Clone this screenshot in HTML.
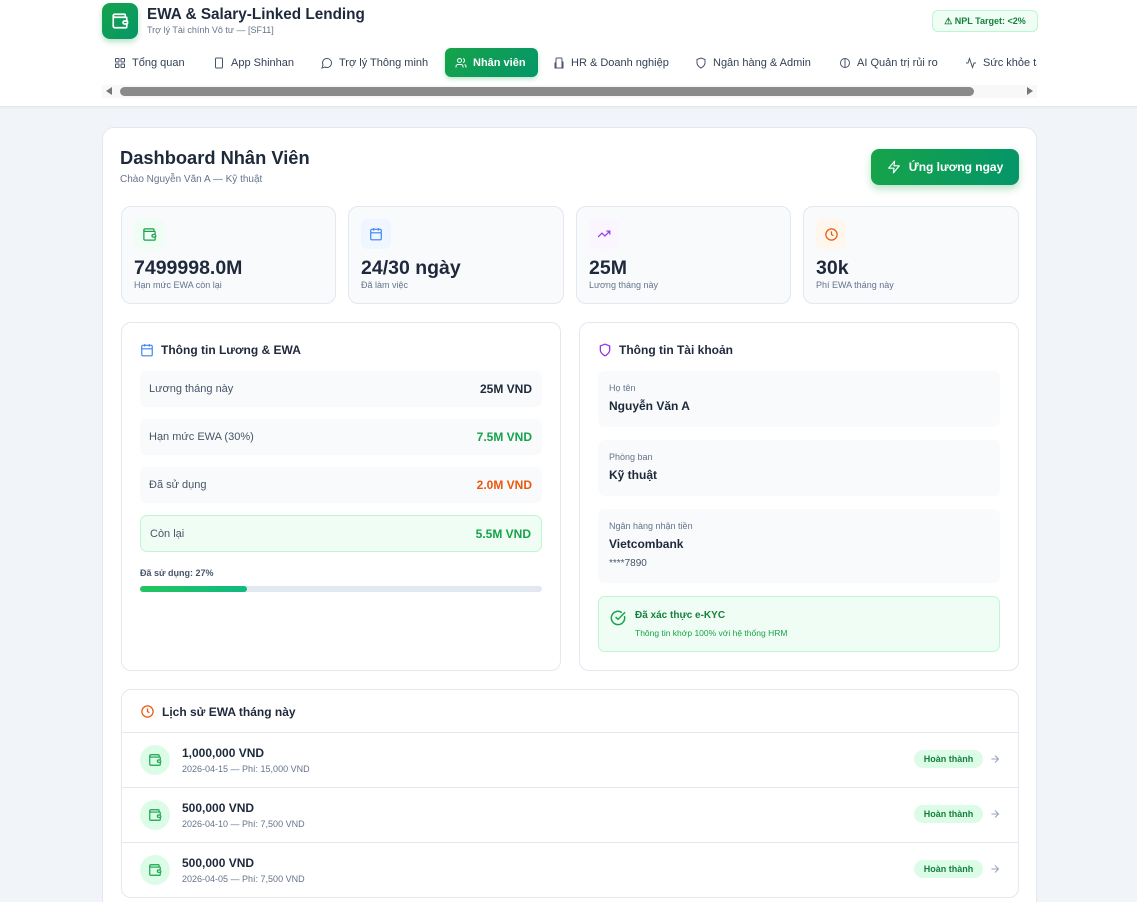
<!DOCTYPE html>
<html><head><meta charset="utf-8">
<style>
*{box-sizing:border-box;margin:0;padding:0}
html,body{width:1137px;height:902px;overflow:hidden}
body{background:#f1f5f9;font-family:"Liberation Sans",sans-serif;color:#1e293b;position:relative}
.a{position:absolute}
svg{display:block}
.hdr{left:0;top:0;width:1137px;height:107px;background:#fff;border-bottom:1px solid #e2e8f0;box-shadow:0 1px 3px rgba(0,0,0,.05)}
.logo{left:102px;top:3px;width:36px;height:36px;border-radius:8px;background:linear-gradient(135deg,#16a34a,#059669);box-shadow:0 3px 6px rgba(22,163,74,.3);display:flex;align-items:center;justify-content:center}
.tab{top:48px;height:29px;display:flex;align-items:center;gap:6px;font-size:11px;color:#334155;padding:0 10px;white-space:nowrap}
.tab.act{background:linear-gradient(135deg,#16a34a,#059669);color:#fff;font-weight:bold;border-radius:6px;box-shadow:0 2px 4px rgba(22,163,74,.3)}
.card{left:102px;top:127px;width:935px;height:800px;background:#fff;border:1px solid #e2e8f0;border-radius:12px}
.stat{top:206px;height:98px;background:#f8fafc;border:1px solid #e2e8f0;border-radius:10px}
.stat .ic{position:absolute;left:12px;top:12px;width:30px;height:30px;border-radius:7px;display:flex;align-items:center;justify-content:center}
.stat .v{position:absolute;left:12px;top:50px;font-size:19.5px;font-weight:bold;color:#1e293b}
.stat .l{position:absolute;left:12px;top:73px;font-size:9px;color:#64748b}
.pan{top:322px;height:349px;background:#fff;border:1px solid #e2e8f0;border-radius:10px}
.ph{font-size:12px;font-weight:bold;display:flex;align-items:center;gap:7px}
.row{left:140px;width:402px;height:36px;background:#f8fafc;border-radius:7px;display:flex;align-items:center;justify-content:space-between;padding:0 10px 0 9px;font-size:11px;color:#475569}
.row b{font-size:12px;color:#1e293b}
.box{left:598px;width:402px;background:#f8fafc;border-radius:7px;padding:12px 11px}
.box .k{font-size:9px;color:#64748b}
.box .val{font-size:12px;font-weight:bold;margin-top:6px;color:#1e293b}
.hist{left:121px;top:689px;width:898px;height:209px;background:#fff;border:1px solid #e2e8f0;border-radius:10px;overflow:hidden}
.hr{position:absolute;left:0;width:898px;height:55px;border-top:1px solid #e2e8f0}
.hr .c{position:absolute;left:18px;top:12px;width:30px;height:30px;border-radius:50%;background:#dcfce7;display:flex;align-items:center;justify-content:center}
.hr .t{position:absolute;left:60px;top:13px;font-size:12px;font-weight:bold}
.hr .s{position:absolute;left:60px;top:31px;font-size:9px;color:#64748b}
.hr .bd{position:absolute;left:792px;top:17px;width:69px;height:18px;border-radius:9px;background:#dcfce7;color:#15803d;font-size:9px;font-weight:bold;text-align:center;line-height:18px}
.hr .ar{position:absolute;left:867px;top:20px}
</style></head><body>
<div class="a hdr"></div>
<div class="a logo"><svg width="18" height="18" viewBox="0 0 24 24" fill="none" stroke="#fff" stroke-width="2.2" stroke-linecap="round" stroke-linejoin="round"><path d="M19 7V4a1 1 0 0 0-1-1H5a2 2 0 0 0 0 4h15a1 1 0 0 1 1 1v4h-3a2 2 0 0 0 0 4h3a1 1 0 0 0 1-1v-2a1 1 0 0 0-1-1"/><path d="M3 5v14a2 2 0 0 0 2 2h15a1 1 0 0 0 1-1v-4"/></svg></div>
<div class="a" style="left:147px;top:6px;font-size:15.3px;font-weight:bold;color:#1e293b">EWA &amp; Salary-Linked Lending</div>
<div class="a" style="left:147px;top:25px;font-size:9px;color:#64748b">Trợ lý Tài chính Vô tư — [SF11]</div>
<div class="a" style="left:932px;top:10px;width:106px;height:22px;border:1px solid #bbf7d0;background:#f0fdf4;border-radius:6px;font-size:9px;font-weight:bold;color:#15803d;text-align:center;line-height:20px">⚠ NPL Target: &lt;2%</div>

<div class="a tab" style="left:104px"><svg width="12" height="12" viewBox="0 0 24 24" fill="none" stroke="#475569" stroke-width="2"><rect x="3" y="3" width="7" height="7" rx="1"/><rect x="14" y="3" width="7" height="7" rx="1"/><rect x="3" y="14" width="7" height="7" rx="1"/><rect x="14" y="14" width="7" height="7" rx="1"/></svg>Tổng quan</div>
<div class="a tab" style="left:203px"><svg width="12" height="12" viewBox="0 0 24 24" fill="none" stroke="#475569" stroke-width="2"><rect x="5" y="2" width="14" height="20" rx="2"/></svg>App Shinhan</div>
<div class="a tab" style="left:311px"><svg width="12" height="12" viewBox="0 0 24 24" fill="none" stroke="#475569" stroke-width="2"><path d="M7.9 20A9 9 0 1 0 4 16.1L2 22Z"/></svg>Trợ lý Thông minh</div>
<div class="a tab act" style="left:445px;width:93px"><svg width="12" height="12" viewBox="0 0 24 24" fill="none" stroke="#fff" stroke-width="2"><path d="M16 21v-2a4 4 0 0 0-4-4H6a4 4 0 0 0-4 4v2"/><circle cx="9" cy="7" r="4"/><path d="M22 21v-2a4 4 0 0 0-3-3.9M16 3.1a4 4 0 0 1 0 7.8"/></svg>Nhân viên</div>
<div class="a tab" style="left:543px"><svg width="12" height="12" viewBox="0 0 24 24" fill="none" stroke="#475569" stroke-width="2"><path d="M6 22V4a2 2 0 0 1 2-2h8a2 2 0 0 1 2 2v18ZM6 12H4v10h16V10h-2"/></svg>HR &amp; Doanh nghiệp</div>
<div class="a tab" style="left:685px"><svg width="12" height="12" viewBox="0 0 24 24" fill="none" stroke="#475569" stroke-width="2"><path d="M12 22s8-4 8-10V5l-8-3-8 3v7c0 6 8 10 8 10z"/></svg>Ngân hàng &amp; Admin</div>
<div class="a tab" style="left:829px"><svg width="12" height="12" viewBox="0 0 24 24" fill="none" stroke="#475569" stroke-width="2"><circle cx="12" cy="12" r="9"/><path d="M12 3v18"/></svg>AI Quản trị rủi ro</div>
<div class="a" style="left:955px;top:48px;width:82px;height:29px;overflow:hidden"><div class="tab" style="position:absolute;left:0;top:0"><svg width="12" height="12" viewBox="0 0 24 24" fill="none" stroke="#475569" stroke-width="2"><path d="M22 12h-4l-3 9L9 3l-3 9H2"/></svg>Sức khỏe tài chính</div></div>

<div class="a" style="left:102px;top:85px;width:935px;height:13px;background:#f8f8f8"></div>
<div class="a" style="left:106px;top:87px;width:0;height:0;border-top:4px solid transparent;border-bottom:4px solid transparent;border-right:6px solid #777"></div>
<div class="a" style="left:1027px;top:87px;width:0;height:0;border-top:4px solid transparent;border-bottom:4px solid transparent;border-left:6px solid #777"></div>
<div class="a" style="left:120px;top:87px;width:854px;height:9px;border-radius:5px;background:#8a8a8a"></div>

<div class="a card" style="height:790px"></div>
<div class="a" style="left:120px;top:147px;font-size:18.3px;font-weight:bold;color:#1e293b">Dashboard Nhân Viên</div>
<div class="a" style="left:120px;top:174px;font-size:10px;color:#64748b">Chào Nguyễn Văn A — Kỹ thuật</div>
<div class="a" style="left:871px;top:149px;width:148px;height:36px;border-radius:8px;background:linear-gradient(90deg,#16a34a,#059669);box-shadow:0 4px 8px rgba(22,163,74,.3);display:flex;align-items:center;justify-content:center;gap:8px;color:#fff;font-size:12px;font-weight:bold"><svg width="14" height="14" viewBox="0 0 24 24" fill="none" stroke="#fff" stroke-width="2" stroke-linejoin="round"><path d="M13 2 3 14h9l-1 8 10-12h-9l1-8z"/></svg>Ứng lương ngay</div>

<div class="a stat" style="left:121px;width:215px"><div class="ic" style="background:#f0fdf4"><svg width="15" height="15" viewBox="0 0 24 24" fill="none" stroke="#16a34a" stroke-width="2"><path d="M19 7V4a1 1 0 0 0-1-1H5a2 2 0 0 0 0 4h15a1 1 0 0 1 1 1v4h-3a2 2 0 0 0 0 4h3a1 1 0 0 0 1-1v-2"/><path d="M3 5v14a2 2 0 0 0 2 2h15a1 1 0 0 0 1-1v-4"/></svg></div><div class="v">7499998.0M</div><div class="l">Hạn mức EWA còn lại</div></div>
<div class="a stat" style="left:348px;width:216px"><div class="ic" style="background:#eff6ff"><svg width="14" height="14" viewBox="0 0 24 24" fill="none" stroke="#3b82f6" stroke-width="2"><rect x="3" y="4" width="18" height="18" rx="2"/><path d="M16 2v4M8 2v4M3 10h18"/></svg></div><div class="v">24/30 ngày</div><div class="l">Đã làm việc</div></div>
<div class="a stat" style="left:576px;width:215px"><div class="ic" style="background:#faf5ff"><svg width="14" height="14" viewBox="0 0 24 24" fill="none" stroke="#9333ea" stroke-width="2"><path d="M22 7l-8.5 8.5-5-5L2 17M16 7h6v6"/></svg></div><div class="v">25M</div><div class="l">Lương tháng này</div></div>
<div class="a stat" style="left:803px;width:216px"><div class="ic" style="background:#fff7ed"><svg width="15" height="15" viewBox="0 0 24 24" fill="none" stroke="#ea580c" stroke-width="2"><circle cx="12" cy="12" r="9"/><path d="M12 7v5l3 2"/></svg></div><div class="v">30k</div><div class="l">Phí EWA tháng này</div></div>

<div class="a pan" style="left:121px;width:440px"></div>
<div class="a ph" style="left:140px;top:343px"><svg width="14" height="14" viewBox="0 0 24 24" fill="none" stroke="#3b82f6" stroke-width="2"><rect x="3" y="4" width="18" height="18" rx="2"/><path d="M16 2v4M8 2v4M3 10h18"/></svg>Thông tin Lương &amp; EWA</div>
<div class="a row" style="top:371px">Lương tháng này<b>25M VND</b></div>
<div class="a row" style="top:419px">Hạn mức EWA (30%)<b style="color:#16a34a">7.5M VND</b></div>
<div class="a row" style="top:467px">Đã sử dụng<b style="color:#ea580c">2.0M VND</b></div>
<div class="a row" style="top:515px;height:37px;background:#f0fdf4;border:1px solid #bbf7d0">Còn lại<b style="color:#16a34a">5.5M VND</b></div>
<div class="a" style="left:140px;top:568px;font-size:9px;font-weight:bold;color:#475569">Đã sử dụng: 27%</div>
<div class="a" style="left:140px;top:586px;width:402px;height:6px;border-radius:3px;background:#e2e8f0"><div style="width:107px;height:6px;border-radius:3px;background:linear-gradient(90deg,#22c55e,#10b981)"></div></div>

<div class="a pan" style="left:579px;width:440px"></div>
<div class="a ph" style="left:598px;top:343px"><svg width="14" height="14" viewBox="0 0 24 24" fill="none" stroke="#9333ea" stroke-width="2.2"><path d="M12 22s8-4 8-10V5l-8-3-8 3v7c0 6 8 10 8 10z"/></svg>Thông tin Tài khoản</div>
<div class="a box" style="top:371px;height:56px"><div class="k">Họ tên</div><div class="val">Nguyễn Văn A</div></div>
<div class="a box" style="top:440px;height:56px"><div class="k">Phòng ban</div><div class="val">Kỹ thuật</div></div>
<div class="a box" style="top:509px;height:74px"><div class="k">Ngân hàng nhận tiền</div><div class="val">Vietcombank</div><div style="font-size:10px;color:#475569;margin-top:7px">****7890</div></div>
<div class="a" style="left:598px;top:596px;width:402px;height:56px;background:#f0fdf4;border:1px solid #bbf7d0;border-radius:7px"></div>
<svg class="a" style="left:610px;top:610px" width="16" height="16" viewBox="0 0 24 24" fill="none" stroke="#16a34a" stroke-width="2.2" stroke-linecap="round"><path d="M21.8 10A10 10 0 1 1 17 3.3"/><path d="m9 11 3 3L22 4"/></svg>
<div class="a" style="left:635px;top:610px;font-size:10px;font-weight:bold;color:#15803d">Đã xác thực e-KYC</div>
<div class="a" style="left:635px;top:628px;font-size:8.5px;color:#16a34a">Thông tin khớp 100% với hệ thống HRM</div>

<div class="a hist">
<div style="position:absolute;left:18px;top:14px" class="ph"><svg width="15" height="15" viewBox="0 0 24 24" fill="none" stroke="#ea580c" stroke-width="2"><circle cx="12" cy="12" r="9"/><path d="M12 7v5l3 2"/></svg>Lịch sử EWA tháng này</div>
<div class="hr" style="top:42px"><div class="c"><svg width="14" height="14" viewBox="0 0 24 24" fill="none" stroke="#16a34a" stroke-width="2"><path d="M19 7V4a1 1 0 0 0-1-1H5a2 2 0 0 0 0 4h15a1 1 0 0 1 1 1v4h-3a2 2 0 0 0 0 4h3a1 1 0 0 0 1-1v-2"/><path d="M3 5v14a2 2 0 0 0 2 2h15a1 1 0 0 0 1-1v-4"/></svg></div><div class="t">1,000,000 VND</div><div class="s">2026-04-15 — Phí: 15,000 VND</div><div class="bd">Hoàn thành</div><svg class="ar" width="12" height="12" viewBox="0 0 24 24" fill="none" stroke="#94a3b8" stroke-width="2"><path d="M5 12h14M12 5l7 7-7 7"/></svg></div>
<div class="hr" style="top:97px"><div class="c"><svg width="14" height="14" viewBox="0 0 24 24" fill="none" stroke="#16a34a" stroke-width="2"><path d="M19 7V4a1 1 0 0 0-1-1H5a2 2 0 0 0 0 4h15a1 1 0 0 1 1 1v4h-3a2 2 0 0 0 0 4h3a1 1 0 0 0 1-1v-2"/><path d="M3 5v14a2 2 0 0 0 2 2h15a1 1 0 0 0 1-1v-4"/></svg></div><div class="t">500,000 VND</div><div class="s">2026-04-10 — Phí: 7,500 VND</div><div class="bd">Hoàn thành</div><svg class="ar" width="12" height="12" viewBox="0 0 24 24" fill="none" stroke="#94a3b8" stroke-width="2"><path d="M5 12h14M12 5l7 7-7 7"/></svg></div>
<div class="hr" style="top:152px"><div class="c"><svg width="14" height="14" viewBox="0 0 24 24" fill="none" stroke="#16a34a" stroke-width="2"><path d="M19 7V4a1 1 0 0 0-1-1H5a2 2 0 0 0 0 4h15a1 1 0 0 1 1 1v4h-3a2 2 0 0 0 0 4h3a1 1 0 0 0 1-1v-2"/><path d="M3 5v14a2 2 0 0 0 2 2h15a1 1 0 0 0 1-1v-4"/></svg></div><div class="t">500,000 VND</div><div class="s">2026-04-05 — Phí: 7,500 VND</div><div class="bd">Hoàn thành</div><svg class="ar" width="12" height="12" viewBox="0 0 24 24" fill="none" stroke="#94a3b8" stroke-width="2"><path d="M5 12h14M12 5l7 7-7 7"/></svg></div>
</div>
</body></html>
